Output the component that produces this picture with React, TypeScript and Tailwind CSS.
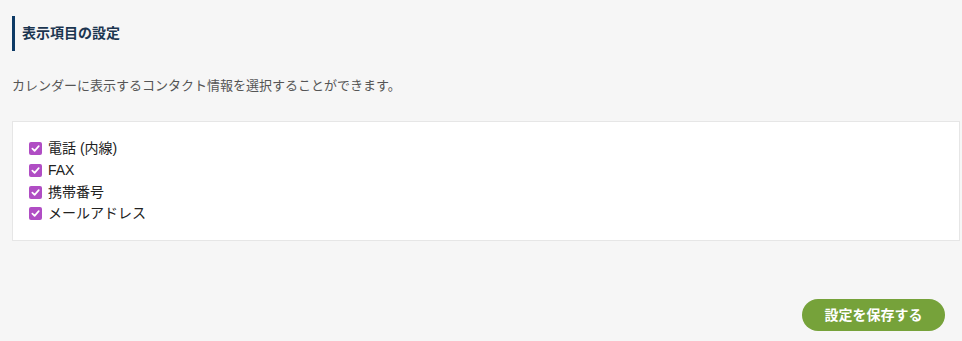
const items = ['電話 (内線)', 'FAX', '携帯番号', 'メールアドレス'];

function CheckBox() {
	return (
		<span className="w-[13px] h-[13px] rounded-[2px] bg-[#b04dc4] flex items-center justify-center shrink-0">
			<svg width="9" height="9" viewBox="0 0 10 10" fill="none">
				<path d="M1.5 5.2 L4 7.6 L8.6 2.4" stroke="white" strokeWidth="1.9" strokeLinecap="round" strokeLinejoin="round" />
			</svg>
		</span>
	);
}

export default function App() {
	return (
		<div
			className="w-[962px] h-[341px] bg-[#f6f6f6] pl-3 pt-4 flex flex-col"
			style={{ fontFamily: '"Liberation Sans", "Noto Sans CJK JP", sans-serif' }}
		>
			<h2 className="border-l-[3px] border-[#0d3a66] h-[35px] pl-[7px] flex items-center text-[14px] font-bold text-[#1b3550]">
				表示項目の設定
			</h2>
			<p className="mt-[26px] text-[13px] text-[#555] leading-[18px]">
				カレンダーに表示するコンタクト情報を選択することができます。
			</p>
			<div className="mt-[26px] w-[948px] h-[120px] bg-white border border-[#e6e6e6] pt-[16px] pl-[16px] flex flex-col">
				{items.map((item) => (
					<label key={item} className="flex items-center gap-[6px] h-[21.7px] text-[14px] text-[#222]">
						<CheckBox />
						<span>{item}</span>
					</label>
				))}
			</div>
			<div className="flex justify-end pr-[17px] mt-auto mb-[10px]">
				<button className="w-[143px] h-[32px] rounded-full bg-[#76a23a] text-white font-bold text-[14px]">
					設定を保存する
				</button>
			</div>
		</div>
	);
}
